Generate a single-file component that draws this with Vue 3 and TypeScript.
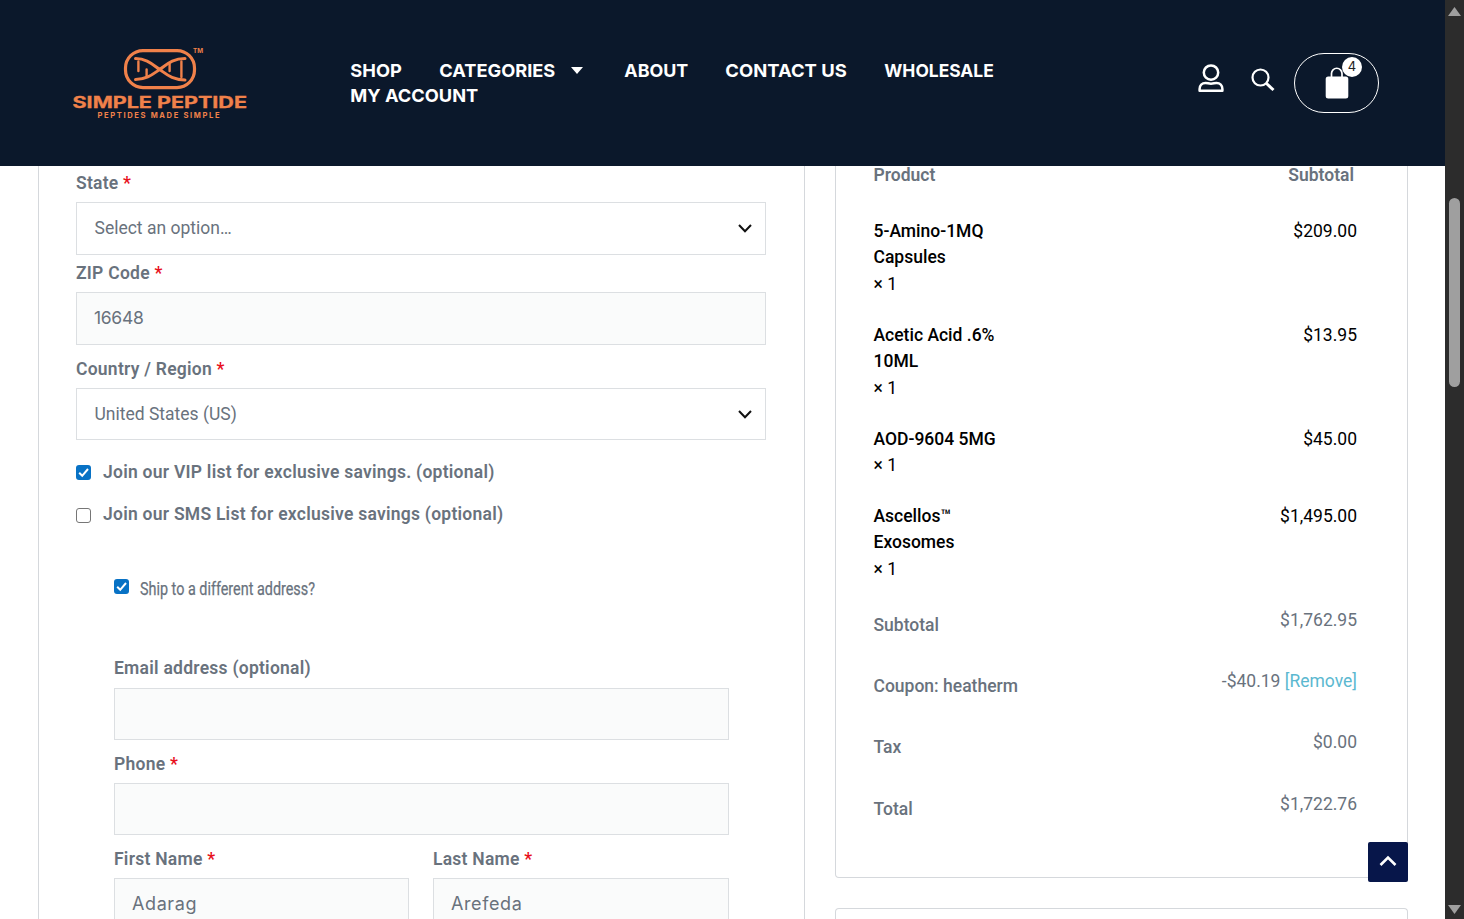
<script setup lang="ts">
interface NavItem { label: string; width: number; gap: number; caret?: boolean }
interface Product { lines: string[]; price: string; height: number }
interface Total { label: string; value: string; remove?: boolean }

const nav: NavItem[] = [
  { label: 'SHOP', width: 52.5, gap: 36 },
  { label: 'CATEGORIES', width: 117, gap: 41, caret: true },
  { label: 'ABOUT', width: 65, gap: 36.5 },
  { label: 'CONTACT US', width: 122.5, gap: 36.5 },
  { label: 'WHOLESALE', width: 110.5, gap: 0 },
  { label: 'MY ACCOUNT', width: 129, gap: 0 },
]

const products: Product[] = [
  { lines: ['5-Amino-1MQ', 'Capsules'], price: '$209.00', height: 104 },
  { lines: ['Acetic Acid .6%', '10ML'], price: '$13.95', height: 104 },
  { lines: ['AOD-9604 5MG'], price: '$45.00', height: 77 },
  { lines: ['Ascellos™', 'Exosomes'], price: '$1,495.00', height: 104 },
]

const totals: Total[] = [
  { label: 'Subtotal', value: '$1,762.95' },
  { label: 'Coupon: heatherm', value: '-$40.19', remove: true },
  { label: 'Tax', value: '$0.00' },
  { label: 'Total', value: '$1,722.76' },
]
</script>

<template>
  <div class="screen">
    <div class="page">
      <header class="header">
        <svg class="logo" width="180" height="76" viewBox="70 45 180 76">
          <g fill="none" stroke="#f0814a" stroke-linecap="round">
            <rect x="125.5" y="50.6" width="69" height="37" rx="17.5" stroke-width="3.2" />
            <path d="M135.500 58.500C147 58.500 153 65 159.700 69.500S172 80 185 80M135.500 79.500C147 79.500 153 74 159.700 69.500S172 58.500 185 58.500" stroke-width="3" />
            <path d="M138.4 61.5V71M146.6 69.5V76.5M169.6 64V71M181.4 61.5V77" stroke-width="2.4" />
          </g>
          <g class="logo-text" fill="#f0814a">
            <text x="193" y="53" font-size="6.2" textLength="10" lengthAdjust="spacingAndGlyphs">TM</text>
            <text x="72.5" y="108.2" font-size="15.4" stroke="#f0814a" stroke-width=".3" textLength="174.5" lengthAdjust="spacingAndGlyphs">SIMPLE PEPTIDE</text>
            <text x="97.5" y="117.6" font-size="7.6" textLength="122" lengthAdjust="spacing">PEPTIDES MADE SIMPLE</text>
          </g>
        </svg>

        <nav class="nav">
          <a v-for="n in nav" :key="n.label" class="nav-item" :style="{ marginRight: n.gap + 'px' }">
            <svg :width="n.width" height="25">
              <text x="0.3" y="19" :textLength="n.width - 1" lengthAdjust="spacingAndGlyphs">{{ n.label }}</text>
            </svg>
            <svg v-if="n.caret" class="caret" width="12" height="7"><path d="M0 0H12L6 7Z" fill="#fff" /></svg>
          </a>
        </nav>

        <div class="actions">
          <svg class="user" width="26" height="29" viewBox="0 0 26 29" fill="none" stroke="#fff" stroke-width="2.5">
            <circle cx="13" cy="8.6" r="7.2" />
            <path d="M1.6 26.8V25C1.6 21.5 4 19 7.5 19C9.5 19 10.5 19.7 13 19.7S16.5 19 18.5 19C22 19 24.4 21.5 24.4 25V26.8Z" stroke-linejoin="round" />
          </svg>
          <svg class="search" width="24" height="24" viewBox="0 0 24 24" fill="none" stroke="#fff">
            <circle cx="9.5" cy="9.5" r="8" stroke-width="2.2" />
            <path d="M15.5 15.5L22.5 22" stroke-width="3" />
          </svg>
          <div class="cart">
            <svg width="24" height="32" viewBox="0 0 24 32">
              <path d="M6.5 11V6.5A5.2 5.2 0 0 1 17 6.5V11" fill="none" stroke="#fff" stroke-width="1.7" />
              <rect x=".7" y="9.5" width="22.6" height="22" rx="2.5" fill="#fff" />
            </svg>
            <span class="badge">4</span>
          </div>
        </div>
      </header>

      <main class="content">
        <section class="billing">
          <div class="label">State <i>*</i></div>
          <div class="field select">Select an option…
            <svg width="14" height="9"><path d="M1 1L7 7.3L13 1" /></svg>
          </div>
          <div class="label zip">ZIP Code <i>*</i></div>
          <div class="field filled"><span class="zip-value">16648</span></div>
          <div class="label next">Country / Region <i>*</i></div>
          <div class="field select country">United States (US)
            <svg width="14" height="9"><path d="M1 1L7 7.3L13 1" /></svg>
          </div>
          <div class="check vip">
            <span class="box on"><svg width="15" height="15"><path d="M3.2 7.8L6.2 10.8L12 4" /></svg></span>
            <b>Join our VIP list for exclusive savings. (optional)</b>
          </div>
          <div class="check sms"><span class="box"></span><b>Join our SMS List for exclusive savings (optional)</b></div>

          <div class="shipping">
            <div class="check ship">
              <span class="box on"><svg width="15" height="15"><path d="M3.2 7.8L6.2 10.8L12 4" /></svg></span>
              <svg class="ship-text" width="180" height="26">
                <text x="0" y="19.5" textLength="175" lengthAdjust="spacingAndGlyphs">Ship to a different address?</text>
              </svg>
            </div>
            <div class="label email">Email address (optional)</div>
            <div class="field filled short"></div>
            <div class="label next">Phone <i>*</i></div>
            <div class="field filled short"></div>
            <div class="names">
              <div>
                <div class="label next">First Name <i>*</i></div>
                <div class="field filled short"><span>Adarag</span></div>
              </div>
              <div>
                <div class="label next">Last Name <i>*</i></div>
                <div class="field filled short"><span>Arefeda</span></div>
              </div>
            </div>
          </div>
        </section>

        <aside class="side">
          <section class="order">
            <div class="order-head"><span>Product</span><span>Subtotal</span></div>
            <div v-for="p in products" :key="p.price" class="product" :style="{ height: p.height + 'px' }">
              <div>
                <div v-for="l in p.lines" :key="l" class="name">{{ l }}</div>
                <div>× 1</div>
              </div>
              <div>{{ p.price }}</div>
            </div>
            <div v-for="t in totals" :key="t.label" class="total">
              <span class="total-label">{{ t.label }}</span>
              <span>{{ t.value }}<a v-if="t.remove"> [Remove]</a></span>
            </div>
          </section>
          <section class="payment"></section>
        </aside>
      </main>
      <button class="to-top">
        <svg width="18" height="12"><path d="M1.5 10L9 2.5L16.5 10" fill="none" stroke="#fff" stroke-width="2.6" /></svg>
      </button>
    </div>
    <div class="scrollbar">
      <svg width="13" height="9"><path d="M6.500 0L13 9H0Z" /></svg>
      <div class="thumb"></div>
      <svg class="down" width="13" height="9"><path d="M6.500 9L13 0H0Z" /></svg>
    </div>
  </div>
</template>

<style>
html, body { margin: 0; overflow: hidden; background: #fff; }
</style>

<style scoped>
* { box-sizing: border-box; }
svg { display: block; flex: none; }
.screen { display: flex; width: 1464px; height: 919px; overflow: hidden; font: 17.5px/26px Roboto, "Liberation Sans", sans-serif; color: #69727d; }
.page { position: relative; width: 1445px; height: 919px; overflow: hidden; background: #fff; }
.header { display: flex; height: 166px; background: #0b182b; align-items: flex-start; }
.logo { margin: 45px 0 0 70px; }
.logo-text { font-family: Inter, sans-serif; font-weight: 700; }
.nav { display: flex; flex-wrap: wrap; width: 730px; margin: 58px 0 0 100px; }
.nav-item { display: flex; height: 25px; align-items: center; }
.nav-item svg { overflow: visible; }
.nav-item text { font: 650 18px Inter, sans-serif; fill: #fff; }
.nav-item .caret { margin-left: 15px; }
.actions { display: flex; margin: 53px 0 0 117.5px; }
.user { margin: 11px 0 0; }
.search { margin: 15px 0 0 27.5px; }
.cart { position: relative; width: 85px; height: 60px; margin-left: 19px; border: 1px solid #fff; border-radius: 30px; padding: 13px 0 0 30px; }
.badge { position: absolute; left: 47px; top: 3px; width: 20px; height: 20px; border-radius: 50%; background: #fff; color: #222; font: 13px/19px Inter, sans-serif; text-align: center; }
.content { display: flex; gap: 30px; height: 753px; padding: 0 37px 0 38px; }
.billing { width: 767px; border: solid #d5d8dc; border-width: 0 1px; padding: 4px 38px 0 37px; }
.label, .check b { font-weight: 600; letter-spacing: .25px; white-space: nowrap; }
.label { height: 26px; margin-bottom: 6px; }
.label i { font-style: normal; color: #e8101c; }
.field { display: flex; height: 53px; border: 1px solid #dcdfe2; align-items: center; padding: 0 13px 2px 17.5px; }
.field svg { fill: none; stroke: #111; stroke-width: 2; margin-top: 2px; }
.select { justify-content: space-between; }
.filled { background: #fafbfb; font: 18px/26px Inter, sans-serif; letter-spacing: .6px; padding: 0 13px 1px 17px; }
.zip-value { font-size: 17.5px; letter-spacing: -.3px; }
.label.zip { margin-top: 5px; }
.label.next { margin-top: 11px; }
.field.country, .field.short { height: 52px; padding-bottom: 0; }
.field.country svg { margin-top: 1px; }
.check { display: flex; height: 26px; }
.check.vip { margin-top: 19px; }
.check.sms { margin-top: 16px; }
.box { width: 15px; height: 15px; margin: 6px 12px 0 0; border: 1px solid #767676; border-radius: 3px; background: #fff; flex: none; }
.sms .box { margin-top: 7px; }
.box.on { border: 0; background: #0872c5; }
.box path { fill: none; stroke: #fff; stroke-width: 2; }
.shipping { padding: 48px 37px 0 38px; }
.ship .box { margin: 4px 11px 0 0; }
.ship-text { overflow: visible; }
.ship-text text { font: 450 18.5px Roboto, sans-serif; fill: #69727d; stroke: #69727d; stroke-width: .25px; }
.label.email { margin: 54px 0 7px; }
.names { display: grid; grid-template-columns: 295px 296px; gap: 24px; }
.side { width: 573px; }
.order { height: 712px; border: solid #d5d8dc; border-width: 0 1px 1px; border-radius: 0 0 4px 4px; padding: 0 50px 0 37.5px; }
.order-head { display: flex; justify-content: space-between; height: 52px; padding: 0 3px 0 0; line-height: 18px; font-weight: 600; }
.product { display: flex; justify-content: space-between; line-height: 26.25px; color: #000; }
.name { font-weight: 500; }
.total { display: flex; justify-content: space-between; height: 61.2px; }
.total-label { padding-top: 5px; font-weight: 500; }
.total a { color: #5bb8d0; }
.payment { height: 40px; margin-top: 30px; border: 1px solid #d5d8dc; border-bottom: 0; border-radius: 4px 4px 0 0; }
.to-top { position: absolute; right: 37px; top: 842px; width: 40px; height: 40px; border: 0; border-radius: 2px; background: #07164a; padding: 0 0 2px 11px; }
.scrollbar { display: flex; flex-direction: column; align-items: center; width: 19px; background: #2c2c2c; padding: 7px 0 5px; }
.scrollbar path { fill: #9f9f9f; }
.thumb { width: 11px; height: 189px; margin-top: 182px; border-radius: 6px; background: #9f9f9f; }
.down { margin-top: auto; }
</style>
